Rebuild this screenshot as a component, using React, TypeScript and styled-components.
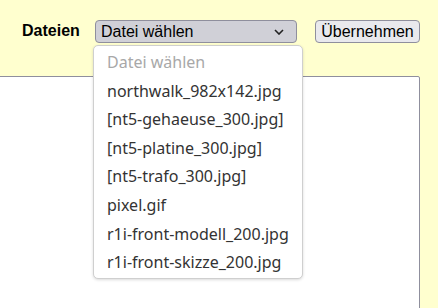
import React from "react";
import styled, { createGlobalStyle } from "styled-components";

const GlobalStyle = createGlobalStyle`
  html, body {
    margin: 0;
    padding: 0;
    background: #ffffcf;
    overflow: hidden;
  }
  body {
    font-family: "Liberation Sans", Arial, sans-serif;
  }
`;

const Page = styled.div`
  position: relative;
  width: 438px;
  height: 308px;
  padding-top: 20px;
  box-sizing: border-box;
  overflow: hidden;
`;

const Toolbar = styled.div`
  display: flex;
  align-items: center;
  height: 23px;
  padding-left: 22px;
`;

const Label = styled.label`
  font-size: 16px;
  font-weight: bold;
  color: #000;
  width: 58px;
  margin-right: 15px;
  margin-top: -1px;
`;

const SelectBox = styled.div`
  display: flex;
  align-items: center;
  justify-content: space-between;
  box-sizing: border-box;
  width: 202px;
  height: 23px;
  padding: 0 12px 0 5px;
  border: 1px solid #8f8f9d;
  border-radius: 4px;
  background: #d0d0d7;
  font-size: 16px;
  color: #000;
`;

const Button = styled.button`
  box-sizing: border-box;
  margin-left: 18px;
  width: 105px;
  height: 23px;
  padding: 0 4px;
  border: 1px solid #8f8f9d;
  border-radius: 4px;
  background: #e9e9ed;
  font-family: "Liberation Sans", Arial, sans-serif;
  font-size: 16px;
  color: #000;
`;

const TextArea = styled.div`
  box-sizing: border-box;
  margin-top: 33px;
  margin-left: -2px;
  width: 422px;
  height: 260px;
  background: #fff;
  border: 1px solid #8f8f9d;
  border-top-right-radius: 2px;
`;

const Dropdown = styled.ul`
  position: absolute;
  left: 93px;
  top: 45px;
  width: 210px;
  height: 234px;
  box-sizing: border-box;
  margin: 0;
  padding: 2px 0;
  list-style: none;
  background: #fff;
  border: 1px solid #cfcfcf;
  border-radius: 5px;
  box-shadow: 0 1px 3px rgba(0, 0, 0, 0.15);
  font-family: "Noto Sans", "Open Sans", sans-serif;
`;

const Option = styled.li<{ $disabled?: boolean }>`
  height: 28.6px;
  line-height: 28.6px;
  padding-left: 13px;
  font-size: 16px;
  color: ${({ $disabled }) => ($disabled ? "#a8a8a8" : "#333")};
  white-space: nowrap;
`;

const files = [
  "northwalk_982x142.jpg",
  "[nt5-gehaeuse_300.jpg]",
  "[nt5-platine_300.jpg]",
  "[nt5-trafo_300.jpg]",
  "pixel.gif",
  "r1i-front-modell_200.jpg",
  "r1i-front-skizze_200.jpg",
];

export default function App() {
  return (
    <>
      <GlobalStyle />
      <Page>
        <Toolbar>
          <Label>Dateien</Label>
          <SelectBox>
            <span>Datei wählen</span>
            <svg width="10" height="6" viewBox="0 0 10 6">
              <polyline points="1,1 5,5 9,1" fill="none" stroke="#222" strokeWidth="1.6" />
            </svg>
          </SelectBox>
          <Button>Übernehmen</Button>
        </Toolbar>
        <TextArea />
        <Dropdown>
          <Option $disabled>Datei wählen</Option>
          {files.map((f) => (
            <Option key={f}>{f}</Option>
          ))}
        </Dropdown>
      </Page>
    </>
  );
}
